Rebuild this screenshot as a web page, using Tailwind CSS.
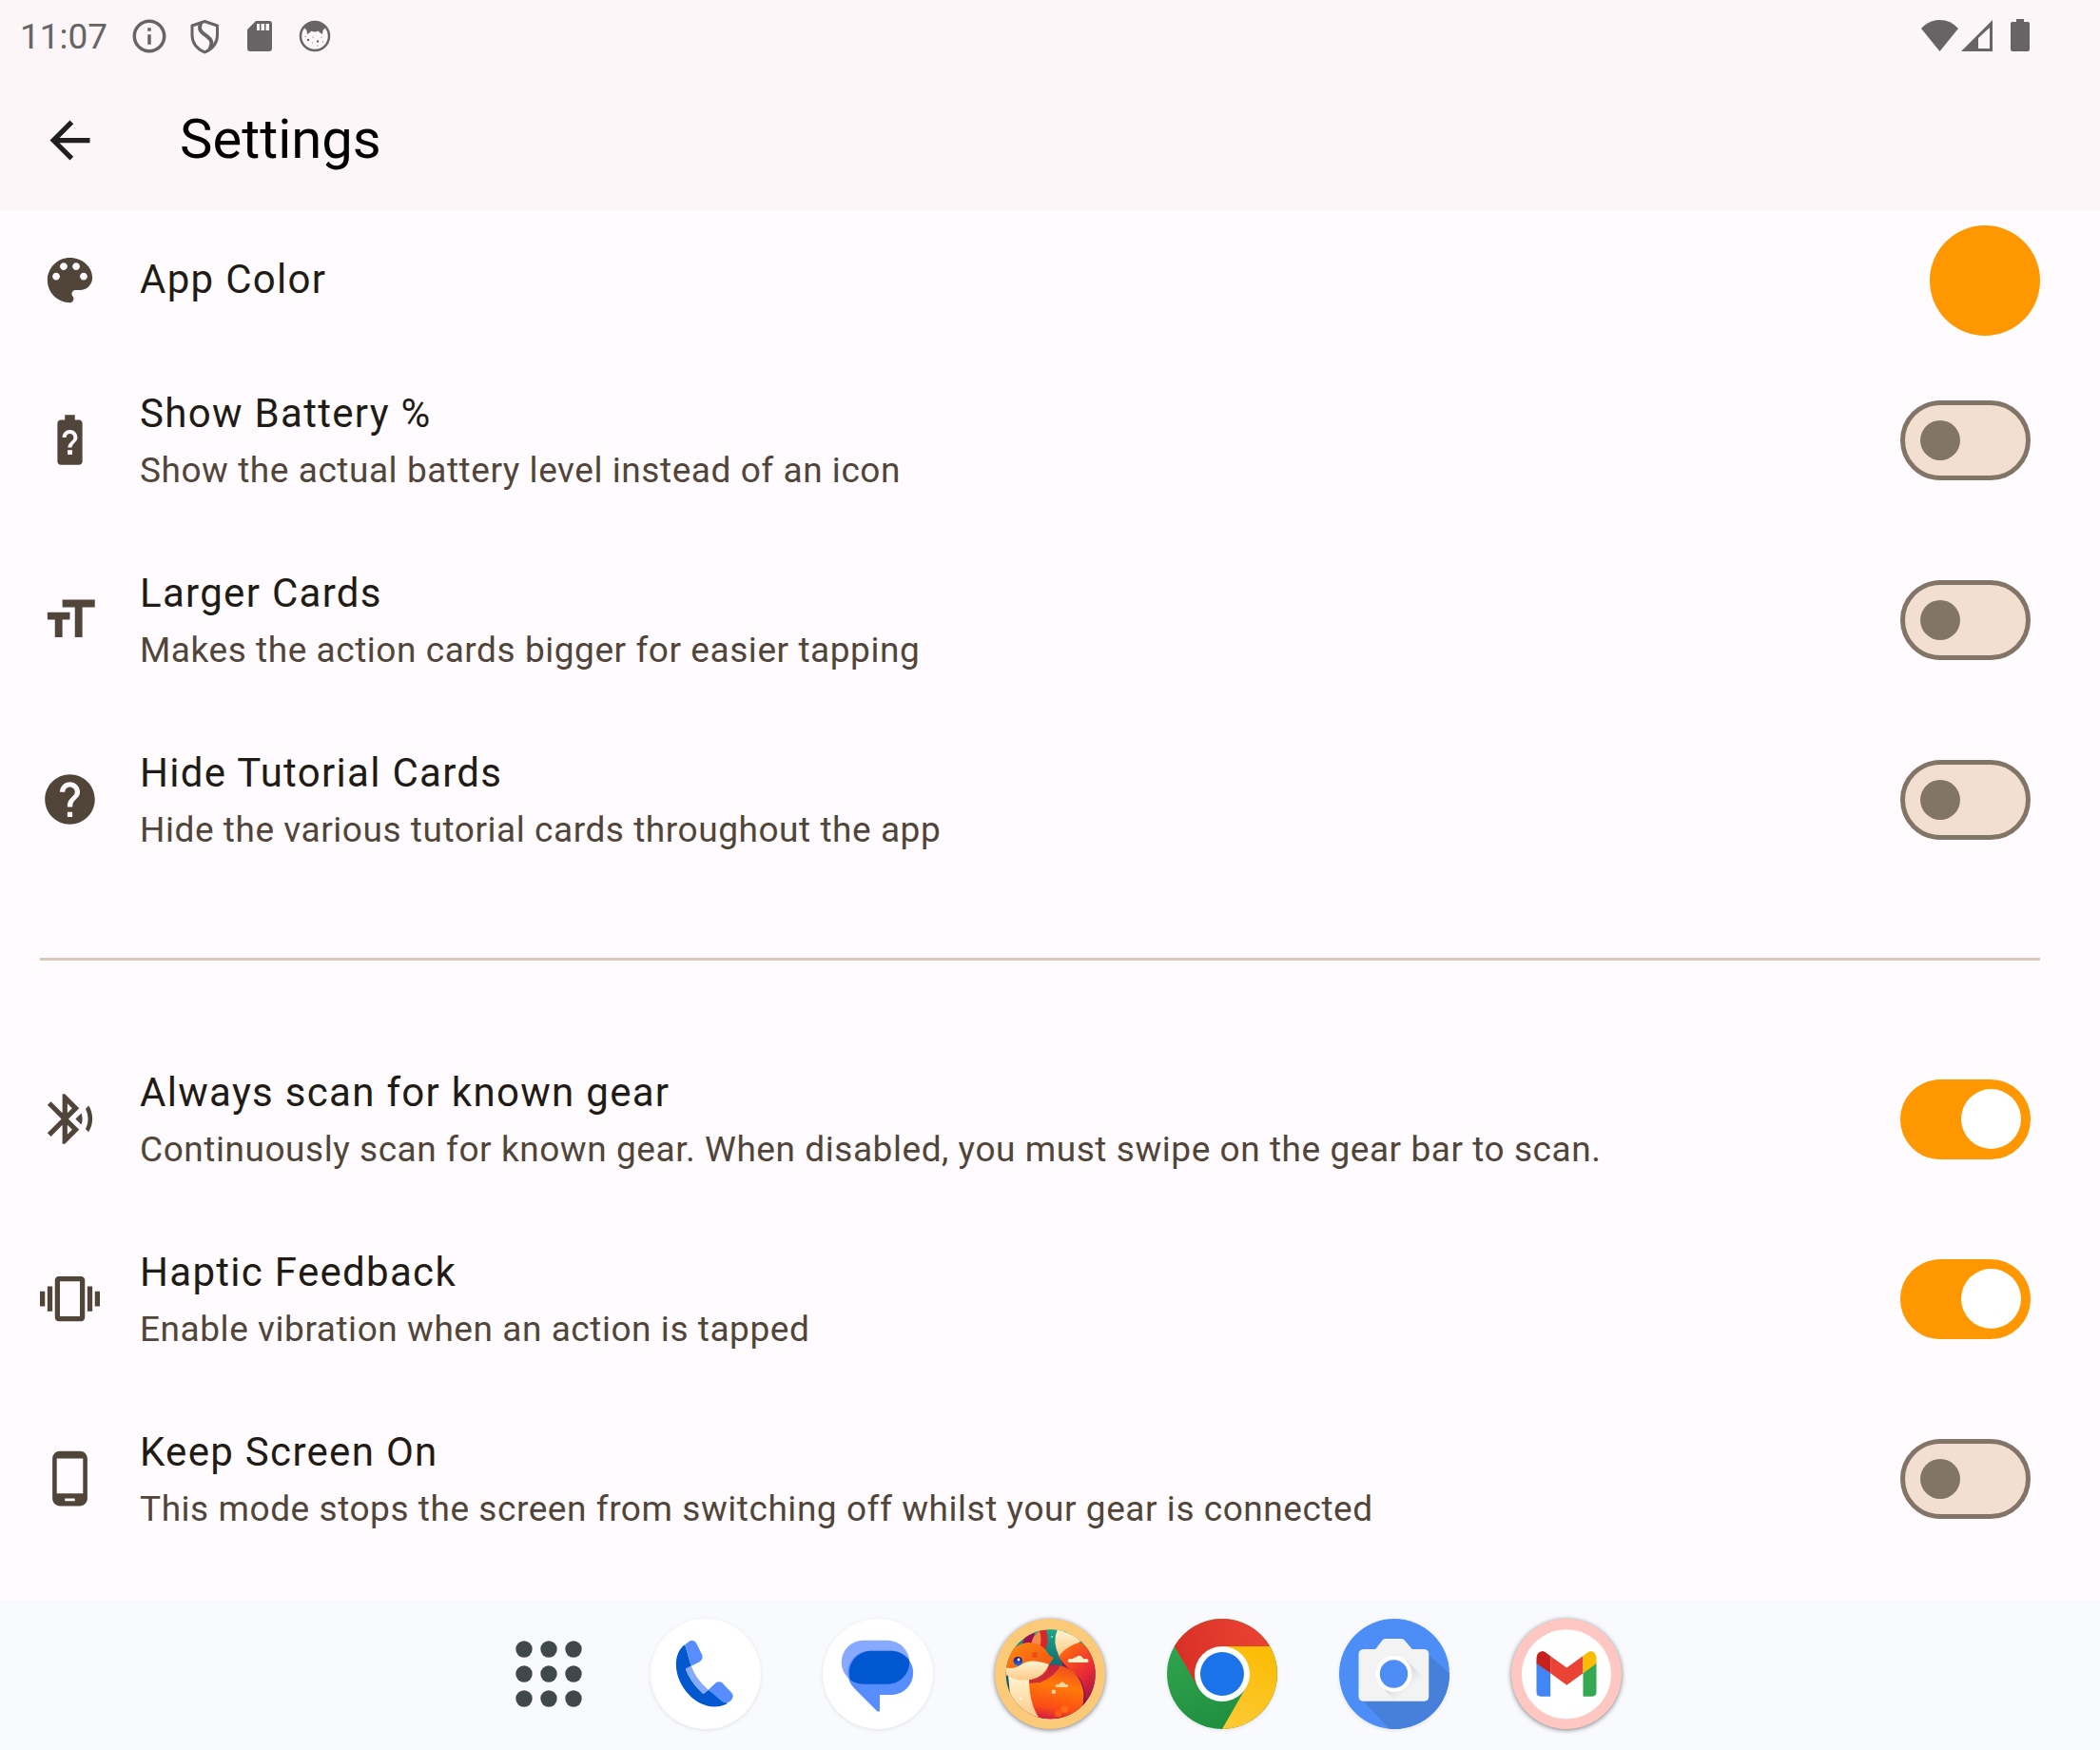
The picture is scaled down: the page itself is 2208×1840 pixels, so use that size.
<!DOCTYPE html>
<html lang="en">
<head>
<meta charset="utf-8">
<meta name="viewport" content="width=device-width, initial-scale=1">
<title>Settings</title>
<script src="https://cdn.jsdelivr.net/npm/@tailwindcss/browser@4"></script>
</head>
<body class="flex min-h-screen flex-col bg-[#fffbff] font-[Roboto,sans-serif] text-[#1f1b16]">

<header class="bg-[#fcf6f8]">
  <!-- Status bar -->
  <div class="flex h-[74px] items-center justify-between pl-[21px] pr-[74px] text-[#666464]">
    <div class="flex items-center gap-4 pt-0.5">
      <time class="w-[99px] pt-0.5 text-[37px] leading-[42px]">11:07</time>
      <svg class="size-[42px]" viewBox="0 0 24 24" fill="currentColor" aria-hidden="true"><path d="M11 7h2v2h-2zm0 4h2v6h-2zm1-9C6.48 2 2 6.48 2 12s4.48 10 10 10 10-4.48 10-10S17.52 2 12 2zm0 18c-4.41 0-8-3.59-8-8s3.590-8 8-8 8 3.590 8 8-3.590 8-8 8z"/></svg>
      <svg class="size-[42px]" viewBox="0 0 42 42" fill="none" stroke="currentColor" stroke-width="3" stroke-linejoin="round" aria-hidden="true"><path d="M21.300 5.500L8 10V20C8 28 13.500 34.500 21.300 38C29 34.500 34.500 28 34.500 20V10Z"/><path stroke-width="4" d="M17 7.500C15 13 16 15.500 20 18.500C27 23.500 31 26 26.500 34.500"/></svg>
      <svg class="size-[42px]" viewBox="0 0 42 42" fill="currentColor" fill-rule="evenodd" aria-hidden="true"><path d="M8 14L17 5H31Q34 5 34 8V34Q34 37 31 37H11Q8 37 8 34ZM18 8V15H21V8ZM22.500 8V15H26V8ZM27.500 8V15H31V8Z"/></svg>
      <svg class="size-[42px]" viewBox="0 0 42 42" fill="currentColor" aria-hidden="true"><circle cx="21" cy="21" r="15" fill="none" stroke="currentColor" stroke-width="2.500"/><path d="M9 11A16 16 0 0 1 33 11L29.500 15L29 19L26 17L24.500 15.500Q21 17.500 17.500 15.500L16 17L13 19L12.500 15Z"/><circle cx="14" cy="25" r="1.200"/><circle cx="19" cy="22" r=".6"/><circle cx="24" cy="26.500" r="1.200"/><circle cx="28" cy="22" r=".6"/><circle cx="18.500" cy="28" r=".6"/><circle cx="24" cy="31" r=".6"/><circle cx="29.500" cy="27" r=".6"/><circle cx="11" cy="21.500" r=".6"/></svg>
    </div>
    <div class="flex items-center">
      <svg class="h-[33px] w-[39px]" viewBox="0 0 39 33" fill="currentColor" aria-hidden="true"><path d="M19.500 33L0 9Q8 0 19.500 0T39 9Z"/></svg>
      <svg class="ml-[3px] h-[33px] w-[33px]" viewBox="0 0 33 33" fill="currentColor" fill-rule="evenodd" aria-hidden="true"><path d="M0 33L33 0V33ZM18 19V30H30V8Z"/></svg>
      <svg class="ml-[19px] h-[34px] w-5" viewBox="0 0 20 34" fill="currentColor" aria-hidden="true"><path d="M6 0H14V3H18Q20 3 20 5V32Q20 34 18 34H2Q0 34 0 32V5Q0 3 2 3H6Z"/></svg>
    </div>
  </div>
  <!-- App bar -->
  <div class="flex h-[147px] items-center gap-[84px] px-[42px]">
    <button type="button" aria-label="Back" class="size-[63px] text-[#1f1f1f]">
      <svg class="size-full" viewBox="0 0 24 24" fill="currentColor" aria-hidden="true"><path d="M20 11H7.830l5.590-5.590L12 4l-8 8 8 8 1.410-1.410L7.830 13H20v-2z"/></svg>
    </button>
    <h1 class="pb-1 text-[58px] leading-[74px] text-black">Settings</h1>
  </div>
</header>

<main class="flex-1 pb-[33px]">
  <section aria-label="Appearance">
    <button type="button" class="flex h-[147px] w-full items-center gap-[42px] pl-[42px] pr-[63px] text-left">
      <svg class="size-[63px] shrink-0 text-[#51453a]" viewBox="0 0 24 24" fill="currentColor" aria-hidden="true"><path d="M12 3c-4.970 0-9 4.030-9 9s4.030 9 9 9c.83 0 1.500-.67 1.500-1.500 0-.39-.15-.74-.39-1.010-.23-.26-.38-.61-.38-.99 0-.83.67-1.500 1.500-1.500H16c2.760 0 5-2.240 5-5 0-4.420-4.030-8-9-8zm-5.500 9c-.83 0-1.500-.67-1.500-1.500S5.670 9 6.500 9 8 9.670 8 10.500 7.330 12 6.500 12zm3-4C8.670 8 8 7.330 8 6.500S8.670 5 9.500 5s1.500.67 1.500 1.500S10.330 8 9.500 8zm5 0c-.83 0-1.500-.67-1.500-1.500S13.670 5 14.500 5s1.500.67 1.500 1.500S15.330 8 14.500 8zm3 4c-.83 0-1.500-.67-1.500-1.500S16.670 9 17.500 9s1.500.67 1.500 1.500-.67 1.500-1.500 1.500z"/></svg>
      <span class="flex-1 pb-0.5 text-[42px] leading-[63px] tracking-[0.031em]">App Color</span>
      <span class="size-[116px] shrink-0 rounded-full bg-[#ff9800]"></span>
    </button>

    <div class="flex h-[189px] items-center gap-[42px] pl-[42px] pr-[73px]">
      <svg class="size-[63px] shrink-0 text-[#51453a]" viewBox="0 0 24 24" fill="currentColor" aria-hidden="true"><path d="M15.670 4H14V2h-4v2H8.330C7.600 4 7 4.600 7 5.330v15.330C7 21.400 7.600 22 8.330 22h7.330c.74 0 1.340-.6 1.340-1.330V5.330C17 4.600 16.400 4 15.670 4zm-2.720 13.950h-1.900v-1.900h1.900v1.900zm1.350-5.260s-.38.42-.67.71c-.48.48-.83 1.150-.83 1.600h-1.600c0-.83.46-1.520.93-2l.93-.94c.27-.27.44-.65.44-1.060 0-.83-.67-1.500-1.500-1.500s-1.500.67-1.500 1.500H9c0-1.660 1.340-3 3-3s3 1.340 3 3c0 .66-.27 1.260-.7 1.690z"/></svg>
      <label for="battery" class="flex-1"><span class="block text-[42px] leading-[63px] tracking-[0.031em]">Show Battery %</span><span class="block text-[37px] leading-[57px] tracking-[0.015em] text-[#51453a]">Show the actual battery level instead of an icon</span></label>
      <input id="battery" type="checkbox" role="switch" class="flex h-[84px] w-[137px] shrink-0 appearance-none items-center rounded-full border-5 border-[#837468] bg-[#f2dfd1] pl-4 before:size-[42px] before:rounded-full before:bg-[#837468] before:content-[''] checked:justify-end checked:border-[#ff9800] checked:bg-[#ff9800] checked:pr-[5px] checked:before:size-[63px] checked:before:bg-white">
    </div>

    <div class="flex h-[189px] items-center gap-[42px] pl-[42px] pr-[73px]">
      <svg class="size-[63px] shrink-0 text-[#51453a]" viewBox="0 0 24 24" fill="currentColor" aria-hidden="true"><path d="M9 4v3h5v12h3V7h5V4H9zm-6 8h3v7h3v-7h3V9H3v3z"/></svg>
      <label for="cards" class="flex-1"><span class="block text-[42px] leading-[63px] tracking-[0.031em]">Larger Cards</span><span class="block text-[37px] leading-[57px] tracking-[0.015em] text-[#51453a]">Makes the action cards bigger for easier tapping</span></label>
      <input id="cards" type="checkbox" role="switch" class="flex h-[84px] w-[137px] shrink-0 appearance-none items-center rounded-full border-5 border-[#837468] bg-[#f2dfd1] pl-4 before:size-[42px] before:rounded-full before:bg-[#837468] before:content-[''] checked:justify-end checked:border-[#ff9800] checked:bg-[#ff9800] checked:pr-[5px] checked:before:size-[63px] checked:before:bg-white">
    </div>

    <div class="flex h-[189px] items-center gap-[42px] pl-[42px] pr-[73px]">
      <svg class="size-[63px] shrink-0 text-[#51453a]" viewBox="0 0 24 24" fill="currentColor" aria-hidden="true"><path d="M12 2C6.480 2 2 6.480 2 12s4.480 10 10 10 10-4.480 10-10S17.520 2 12 2zm1 17h-2v-2h2v2zm2.070-7.750l-.9.920C13.450 12.900 13 13.500 13 15h-2v-.5c0-1.100.45-2.100 1.170-2.830l1.240-1.260c.37-.36.59-.86.59-1.410 0-1.100-.9-2-2-2s-2 .9-2 2H8c0-2.210 1.790-4 4-4s4 1.790 4 4c0 .88-.36 1.680-.93 2.250z"/></svg>
      <label for="tutorial" class="flex-1"><span class="block text-[42px] leading-[63px] tracking-[0.031em]">Hide Tutorial Cards</span><span class="block text-[37px] leading-[57px] tracking-[0.015em] text-[#51453a]">Hide the various tutorial cards throughout the app</span></label>
      <input id="tutorial" type="checkbox" role="switch" class="flex h-[84px] w-[137px] shrink-0 appearance-none items-center rounded-full border-5 border-[#837468] bg-[#f2dfd1] pl-4 before:size-[42px] before:rounded-full before:bg-[#837468] before:content-[''] checked:justify-end checked:border-[#ff9800] checked:bg-[#ff9800] checked:pr-[5px] checked:before:size-[63px] checked:before:bg-white">
    </div>
  </section>

  <hr class="my-[72px] ml-[42px] mr-[63px] border-t-3 border-[#d8c8ba]">

  <section aria-label="Behaviour">
    <div class="flex h-[189px] items-center gap-[42px] pl-[42px] pr-[73px]">
      <svg class="size-[63px] shrink-0 text-[#51453a]" viewBox="0 0 24 24" fill="currentColor" aria-hidden="true"><path d="M14.240 12.010l2.320 2.320c.28-.72.44-1.510.44-2.330 0-.82-.16-1.590-.43-2.310l-2.330 2.320zm5.290-5.300l-1.260 1.260c.63 1.210.98 2.570.98 4.020s-.36 2.820-.98 4.020l1.200 1.200c.97-1.540 1.540-3.360 1.540-5.310-.01-1.890-.55-3.670-1.480-5.190zm-3.820 1L10 2H9v7.590L4.410 5 3 6.410 8.590 12 3 17.590 4.410 19 9 14.410V22h1l5.710-5.710-4.300-4.290 4.300-4.290zM11 5.830l1.880 1.880L11 9.590V5.830zm1.880 10.460L11 18.170v-3.760l1.880 1.880z"/></svg>
      <label for="scan" class="flex-1"><span class="block text-[42px] leading-[63px] tracking-[0.031em]">Always scan for known gear</span><span class="block text-[37px] leading-[57px] tracking-[0.015em] text-[#51453a]">Continuously scan for known gear. When disabled, you must swipe on the gear bar to scan.</span></label>
      <input id="scan" type="checkbox" role="switch" checked class="flex h-[84px] w-[137px] shrink-0 appearance-none items-center rounded-full border-5 border-[#837468] bg-[#f2dfd1] pl-4 before:size-[42px] before:rounded-full before:bg-[#837468] before:content-[''] checked:justify-end checked:border-[#ff9800] checked:bg-[#ff9800] checked:pr-[5px] checked:before:size-[63px] checked:before:bg-white">
    </div>

    <div class="flex h-[189px] items-center gap-[42px] pl-[42px] pr-[73px]">
      <svg class="size-[63px] shrink-0 text-[#51453a]" viewBox="0 0 24 24" fill="currentColor" aria-hidden="true"><path d="M0 15h2V9H0v6zm3 2h2V7H3v10zm19-8v6h2V9h-2zm-3 8h2V7h-2v10zM16.500 3h-9C6.670 3 6 3.670 6 4.500v15c0 .83.67 1.500 1.500 1.500h9c.83 0 1.500-.67 1.500-1.500v-15c0-.83-.67-1.500-1.500-1.500zM16 19H8V5h8v14z"/></svg>
      <label for="haptic" class="flex-1"><span class="block text-[42px] leading-[63px] tracking-[0.031em]">Haptic Feedback</span><span class="block text-[37px] leading-[57px] tracking-[0.015em] text-[#51453a]">Enable vibration when an action is tapped</span></label>
      <input id="haptic" type="checkbox" role="switch" checked class="flex h-[84px] w-[137px] shrink-0 appearance-none items-center rounded-full border-5 border-[#837468] bg-[#f2dfd1] pl-4 before:size-[42px] before:rounded-full before:bg-[#837468] before:content-[''] checked:justify-end checked:border-[#ff9800] checked:bg-[#ff9800] checked:pr-[5px] checked:before:size-[63px] checked:before:bg-white">
    </div>

    <div class="flex h-[189px] items-center gap-[42px] pl-[42px] pr-[73px]">
      <svg class="size-[63px] shrink-0 text-[#51453a]" viewBox="0 0 24 24" fill="currentColor" aria-hidden="true"><path d="M16 1H8C6.340 1 5 2.340 5 4v16c0 1.660 1.340 3 3 3h8c1.660 0 3-1.340 3-3V4c0-1.660-1.340-3-3-3zm-2 20h-4v-1h4v1zm3.250-3H6.750V4h10.500v14z"/></svg>
      <label for="screen" class="flex-1"><span class="block text-[42px] leading-[63px] tracking-[0.031em]">Keep Screen On</span><span class="block text-[37px] leading-[57px] tracking-[0.015em] text-[#51453a]">This mode stops the screen from switching off whilst your gear is connected</span></label>
      <input id="screen" type="checkbox" role="switch" class="flex h-[84px] w-[137px] shrink-0 appearance-none items-center rounded-full border-5 border-[#837468] bg-[#f2dfd1] pl-4 before:size-[42px] before:rounded-full before:bg-[#837468] before:content-[''] checked:justify-end checked:border-[#ff9800] checked:bg-[#ff9800] checked:pr-[5px] checked:before:size-[63px] checked:before:bg-white">
    </div>
  </section>
</main>

<nav aria-label="Dock" class="flex items-center justify-center gap-[65px] bg-[#f8fafd] pt-5 pb-[22px]">
  <button type="button" aria-label="All apps" class="flex h-[116px] w-[116px] items-center justify-center pl-8">
    <svg class="size-[70px]" viewBox="0 0 70 70" fill="#40484b" aria-hidden="true"><circle cx="9" cy="9" r="8.700"/><circle cx="35" cy="9" r="8.700"/><circle cx="61" cy="9" r="8.700"/><circle cx="9" cy="35" r="8.700"/><circle cx="35" cy="35" r="8.700"/><circle cx="61" cy="35" r="8.700"/><circle cx="9" cy="61" r="8.700"/><circle cx="35" cy="61" r="8.700"/><circle cx="61" cy="61" r="8.700"/></svg>
  </button>
  <button type="button" aria-label="Phone" class="size-[116px] rounded-full bg-white shadow-[0_1px_4px_rgba(0,0,0,0.1)]">
    <svg class="size-full" viewBox="0 0 116 116" aria-hidden="true">
      <path fill="#0057cf" d="M36.200 27.300C30 31 26.800 40 26.800 48C27 70 46 92.500 67.200 92.500C72 92.500 77 91.500 81 89L60.800 74.700L55.500 79Q42 67 36.800 52.700L42.800 49.700Z"/>
      <path fill="#87a9ff" d="M42.800 49.700L36.800 52.700Q42 67 55.500 79L60.800 74.700Q48 64 42.800 49.700Z"/>
      <path fill="#578dff" d="M36.200 27.300Q40 24 41.500 23.200Q45.500 21.500 48 25.500L54 37.500Q56 42.500 51.500 45.200L42.800 49.700Z"/>
      <path fill="#578dff" d="M60.800 74.700L68.500 67.500Q72 65 75.500 67.500L85 77.500Q88.500 82 84.500 86Q80 90.500 75 87Z"/>
    </svg>
  </button>
  <button type="button" aria-label="Messages" class="size-[116px] rounded-full bg-white shadow-[0_1px_4px_rgba(0,0,0,0.1)]">
    <svg class="size-full" viewBox="0 0 116 116" aria-hidden="true">
      <defs><clipPath id="bubble"><rect x="19.700" y="22.700" width="71.500" height="46" rx="23"/></clipPath></defs>
      <rect x="19.700" y="22.700" width="71.500" height="46" rx="23" fill="#87a9ff"/>
      <path fill="#578dff" d="M49.500 33.700H73.500A23.200 23.200 0 0 1 73.500 80H60V95.500Q60 99 57 97L34 74Q26.300 66 26.300 56.900A23.200 23.200 0 0 1 49.500 33.700Z"/>
      <path clip-path="url(#bubble)" fill="#0057cf" d="M49.500 33.700H73.500A23.200 23.200 0 0 1 73.500 80H49.500A23.200 23.200 0 0 1 49.500 33.700Z"/>
    </svg>
  </button>
  <button type="button" aria-label="Fox" class="size-[116px] rounded-full bg-[#fbca79] shadow-[0_1px_5px_rgba(0,0,0,0.5)]">
    <svg class="size-full" viewBox="0 0 116 116" aria-hidden="true">
      <defs>
        <clipPath id="disc"><circle cx="58.700" cy="58.300" r="47"/></clipPath>
        <linearGradient id="sky" x1="0" y1="0" x2="0" y2="1"><stop offset="0" stop-color="#22b48c"/><stop offset=".5" stop-color="#0f5f6c"/><stop offset="1" stop-color="#123f5c"/></linearGradient>
        <linearGradient id="tail" x1=".3" y1="0" x2=".8" y2="1"><stop offset="0" stop-color="#ff6a10"/><stop offset=".5" stop-color="#e92b35"/><stop offset="1" stop-color="#8a0a4c"/></linearGradient>
        <linearGradient id="torso" x1=".5" y1="0" x2=".3" y2="1"><stop offset="0" stop-color="#f0501b"/><stop offset=".35" stop-color="#ff7a08"/><stop offset=".75" stop-color="#fb4b16"/><stop offset="1" stop-color="#c9124f"/></linearGradient>
        <linearGradient id="head" x1="0" y1="0" x2="1" y2="1"><stop offset="0" stop-color="#ff8c10"/><stop offset="1" stop-color="#f04a14"/></linearGradient>
        <linearGradient id="fur" x1="0" y1="0" x2="0" y2="1"><stop offset="0" stop-color="#fff5d0"/><stop offset="1" stop-color="#ffc98a"/></linearGradient>
        <linearGradient id="eye" x1="0" y1="0" x2="0" y2="1"><stop offset="0" stop-color="#1b1464"/><stop offset="1" stop-color="#2870e8"/></linearGradient>
      </defs>
      <g clip-path="url(#disc)">
        <rect width="116" height="116" fill="url(#sky)"/>
        <path fill="url(#tail)" d="M66.500 38Q72 22 89 24L110 40V98L93 96Q95 72 83 62Q73 52 66.500 38Z"/>
        <path fill="#8c0f4f" d="M69 43Q77 53 88 61Q97 72 95 96L91 96Q94 62 72 50Z"/>
        <path fill="url(#fur)" d="M66 11L90 20L89.500 24.500Q75 29 67.500 39Q60 24 66 11Z"/>
        <path fill="#d8262b" d="M46 12H54Q58 26 52 34L44 30Z"/>
        <path fill="#9c1251" d="M29 26Q31 16 42 13L40 28Z"/>
        <path fill="#f58a4a" d="M38 27Q40 17 47 13Q50 22 47 30Z"/>
        <path fill="url(#torso)" d="M35 62Q50 47 68 49Q89 54 93 76Q96 96 80 108H46Q33 88 35 62Z"/>
        <path fill="#bd1644" opacity=".75" d="M36 68L36 60L58 48L69 49Q64 60 48 67Z"/>
        <path fill="url(#fur)" d="M14 59L36 63Q36 90 47 105Q25 98 16 80Z"/>
        <path fill="url(#head)" d="M11 54Q11 29 34 25Q48 24 55 35Q58 40 62 41Q60 44 57 48Q55 58 46 61L12 60Z"/>
        <path fill="url(#fur)" d="M10 51Q20 54 28 48Q38 41 57 48Q52 61 38 64Q22 67 11 58Z"/>
        <circle cx="42" cy="38" r="3" fill="#ef4d16"/>
        <circle cx="24.300" cy="44.700" r="4.800" fill="url(#eye)"/><circle cx="25" cy="43" r="1.400" fill="#fff"/>
        <path fill="#fff0cc" d="M78.500 42.300H82Q83 40 85.500 40.500Q87 38 90 39Q92.500 40 93 42.300H97Q98.500 42.800 98.500 44.300T97 46H78.500Q76.700 46 76.700 44.200T78.500 42.300Z"/>
        <path fill="#ffd39a" d="M65 69H67.500Q68.500 66 71.500 66.500Q73.500 67 74 69H76Q77.500 69.500 77.200 70.500T76 72H65Q63.500 71.500 63.700 70.500T65 69Z"/>
        <circle cx="61.800" cy="76.700" r="2.200" fill="#ffd9a5"/><circle cx="60" cy="19" r="1" fill="#7ff0c8"/><circle cx="27.500" cy="84" r="1.200" fill="#fff"/>
        <circle cx="66.700" cy="99.700" r="3.500" fill="#ff5a14"/><circle cx="73.300" cy="95.300" r="4" fill="#ff6a14"/>
      </g>
    </svg>
  </button>
  <button type="button" aria-label="Chrome" class="size-[116px] rounded-full shadow-[0_1px_4px_rgba(0,0,0,0.1)]">
    <svg class="size-full" viewBox="0 0 116 116" aria-hidden="true">
      <defs>
        <linearGradient id="red" x1="0" y1=".5" x2="1" y2=".3"><stop offset="0" stop-color="#d93025"/><stop offset="1" stop-color="#ea4335"/></linearGradient>
        <linearGradient id="green" x1=".2" y1="0" x2=".6" y2="1"><stop offset="0" stop-color="#34a853"/><stop offset="1" stop-color="#1e8e3e"/></linearGradient>
        <linearGradient id="yellow" x1=".6" y1="0" x2=".3" y2="1"><stop offset="0" stop-color="#fbbc04"/><stop offset="1" stop-color="#fcc934"/></linearGradient>
      </defs>
      <circle cx="58" cy="58" r="58" fill="url(#green)"/>
      <path fill="url(#red)" d="M7.800 29A58 58 0 0 1 108.200 29H58L33 72.500Z"/>
      <path fill="url(#yellow)" d="M108.200 29A58 58 0 0 1 58 116L83 72.500L58 29Z"/>
      <circle cx="58" cy="58" r="29" fill="#fff"/>
      <circle cx="58" cy="58" r="23" fill="#1a73e8"/>
    </svg>
  </button>
  <button type="button" aria-label="Camera" class="size-[116px] rounded-full shadow-[0_1px_4px_rgba(0,0,0,0.1)]">
    <svg class="size-full" viewBox="0 0 116 116" aria-hidden="true">
      <defs>
        <clipPath id="face"><circle cx="58" cy="58" r="58"/></clipPath>
        <linearGradient id="fade" x1="0" y1="0" x2="1" y2="1"><stop offset=".3" stop-color="#000" stop-opacity=".14"/><stop offset=".65" stop-color="#000" stop-opacity="0"/></linearGradient>
      </defs>
      <g clip-path="url(#face)">
        <rect width="116" height="116" fill="#4d8df6"/>
        <path fill="#4680da" d="M93 37L120 61V120H57L25 86Z"/>
      </g>
      <path fill="#f3f3f3" d="M25.500 32H38.200L45.500 22.500Q46.500 21 48.500 21H66Q67.500 21 68.700 22.500L76.800 32H89.500Q94.300 32.500 94.300 37V82Q94 86.500 89.500 86.700H25.500Q20.800 86.500 20.500 82V37Q20.800 32.500 25.500 32Z"/>
      <path fill="url(#fade)" d="M71 44L88 61L94 67V86.700H59L44 71Z"/>
      <circle cx="57.500" cy="58" r="19" fill="#fff"/>
      <circle cx="57.500" cy="58" r="14.700" fill="#4f8df6"/>
    </svg>
  </button>
  <button type="button" aria-label="Gmail" class="size-[116px] rounded-full bg-[#ffc7c2] shadow-[0_1px_5px_rgba(0,0,0,0.5)]">
    <svg class="size-full" viewBox="0 0 116 116" aria-hidden="true">
      <circle cx="58" cy="58.300" r="47" fill="#fff"/>
      <path fill="#4285f4" d="M26.500 46L41.200 57V81.700H31Q26.500 81.500 26.500 77Z"/>
      <path fill="#34a853" d="M89.500 46L75.500 57V81.700H85Q89.500 81.500 89.500 77Z"/>
      <path fill="#ea4335" d="M41.200 39.300L58.300 51.500L75.500 39V57.300L58.300 69.700L41.200 57.300Z"/>
      <path fill="#c5221f" d="M26.500 41Q27 34.500 33 34Q35.500 34.500 41.200 39.300V57.300L26.500 47Z"/>
      <path fill="#fbbc04" d="M89.500 41Q89 34.500 83.500 34Q81 34.500 75.500 39V57.300L89.500 47Z"/>
    </svg>
  </button>
</nav>
</body>
</html>
